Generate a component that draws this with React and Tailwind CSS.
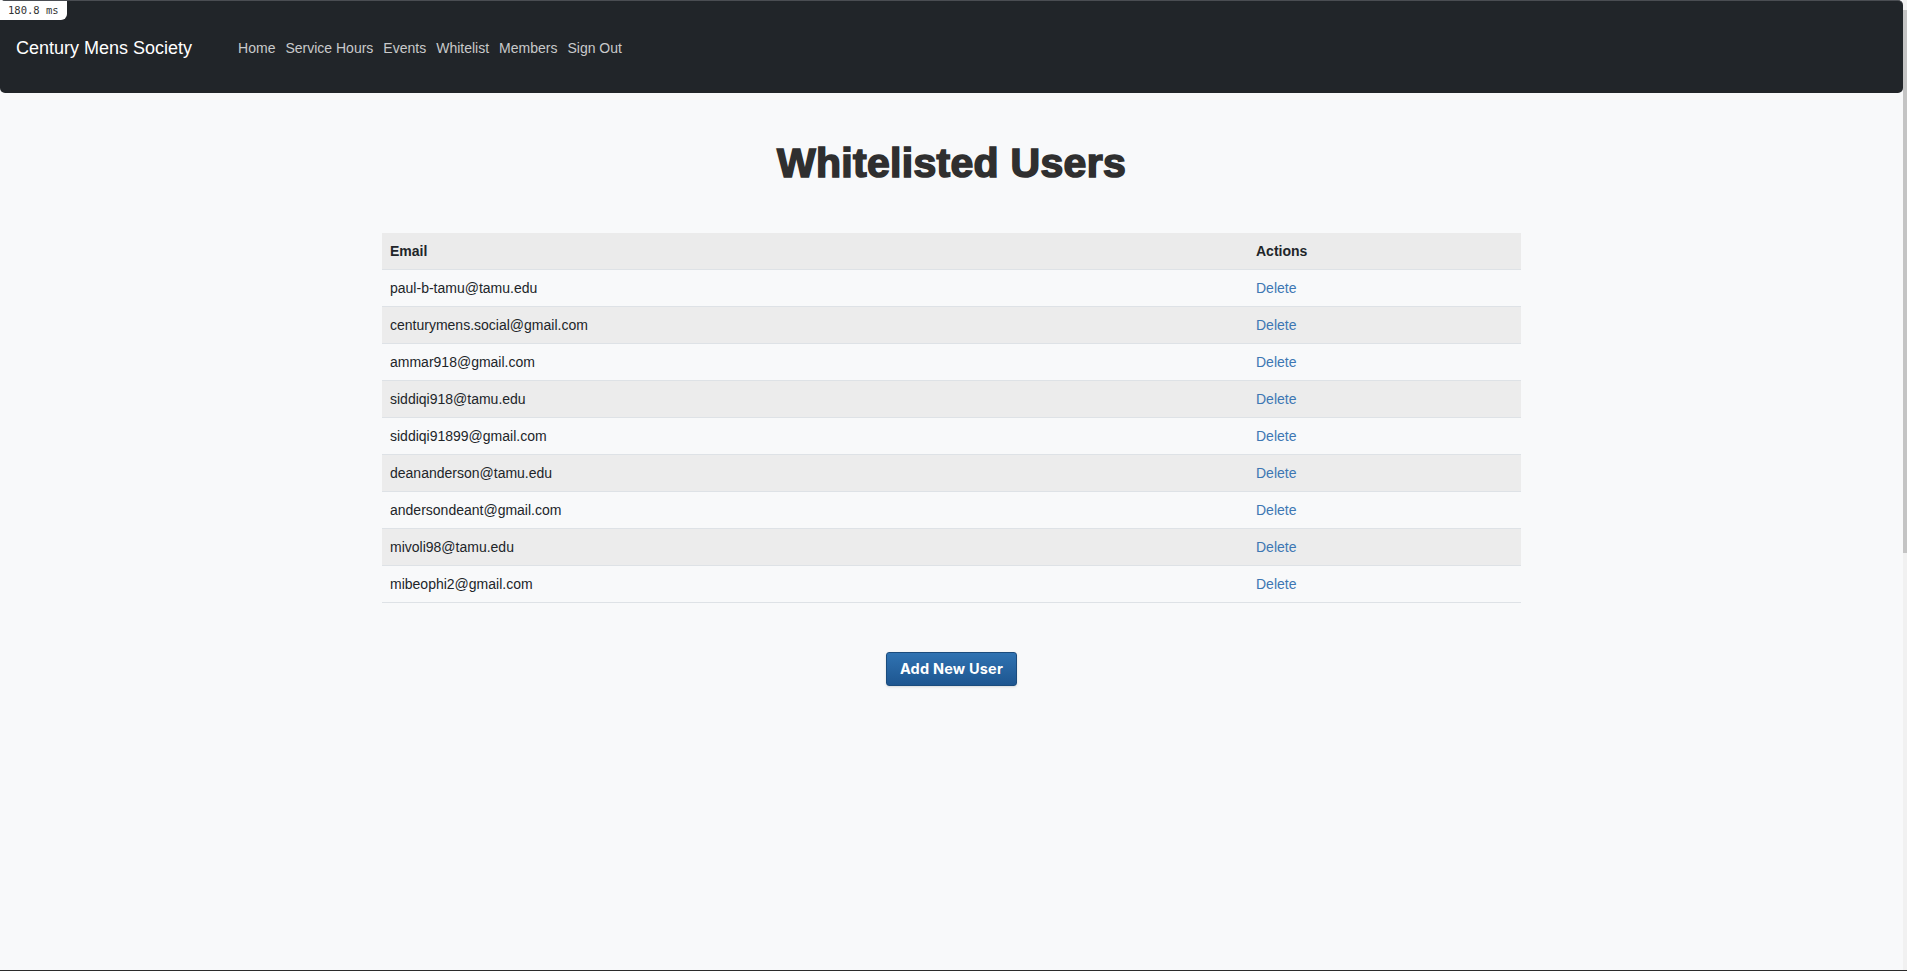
const users = [
  "paul-b-tamu@tamu.edu",
  "centurymens.social@gmail.com",
  "ammar918@gmail.com",
  "siddiqi918@tamu.edu",
  "siddiqi91899@gmail.com",
  "deananderson@tamu.edu",
  "andersondeant@gmail.com",
  "mivoli98@tamu.edu",
  "mibeophi2@gmail.com",
];

const links = ["Home", "Service Hours", "Events", "Whitelist", "Members", "Sign Out"];

function Navbar() {
  return (
    <nav className="relative h-[93px] shrink-0 flex items-center bg-[#212529] border-t border-[#4a4d52] rounded-[5px] pl-4 pt-[2px]">
      <div className="absolute left-0 top-0 h-[19px] px-[8px] flex items-center bg-white rounded-br-[6px] font-['DejaVu_Sans_Mono',monospace] text-[10.5px] text-[#333]">
        180.8 ms
      </div>
      <a href="#" className="text-[18px] text-white leading-none font-['Liberation_Sans',Arial,sans-serif]">
        Century Mens Society
      </a>
      <ul className="flex items-center gap-[10px] ml-[46px] pt-px font-['Liberation_Sans',Arial,sans-serif] text-[14px] text-[#c9cacb]">
        {links.map((l) => (
          <li key={l}>
            <a href="#">{l}</a>
          </li>
        ))}
      </ul>
    </nav>
  );
}

export default function App() {
  return (
    <div className="h-[971px] flex flex-col bg-[#f8f9fa] overflow-hidden">
      <div className="flex flex-1 min-h-0">
        <div className="flex-1 flex flex-col">
          <Navbar />
          <main className="flex flex-col items-center font-['Liberation_Sans',Arial,sans-serif]">
            <h1 className="mt-[46px] h-[48px] leading-[48px] text-[41px] font-bold text-[#2f2f2f] tracking-[0.3px] [-webkit-text-stroke:1.6px_#2f2f2f]">
              Whitelisted Users
            </h1>
            <table className="mt-[46px] w-[1139px] text-[14px] text-[#212529] border-collapse">
              <thead>
                <tr className="bg-[#ebebeb] border-b border-[#dee2e6]">
                  <th className="w-[866px] text-left font-bold px-2 py-2 leading-5">Email</th>
                  <th className="text-left font-bold px-2 py-2 leading-5">Actions</th>
                </tr>
              </thead>
              <tbody>
                {users.map((u, i) => (
                  <tr
                    key={u}
                    className={`border-b border-[#dee2e6] ${i % 2 === 1 ? "bg-[#ececec]" : "bg-[#f8f9fa]"}`}
                  >
                    <td className="px-2 py-2 leading-5">{u}</td>
                    <td className="px-2 py-2 leading-5">
                      <a href="#" className="text-[#3d77b3]">Delete</a>
                    </td>
                  </tr>
                ))}
              </tbody>
            </table>
            <button
              type="button"
              className="mt-[49px] w-[131px] h-[34px] rounded-[3px] border border-[#1b4c7d] bg-gradient-to-b from-[#3073b2] to-[#1e5690] text-white text-[14.5px] font-bold font-['Inter',sans-serif] tracking-[0.2px] shadow-sm"
            >
              Add New User
            </button>
          </main>
        </div>
        <div className="w-[4px] bg-[#f1f1f1] flex flex-col">
          <div className="mt-[10px] h-[543px] bg-[#c4c4c4]" />
        </div>
      </div>
      <div className="h-px bg-[#2b2b2b]" />
    </div>
  );
}
